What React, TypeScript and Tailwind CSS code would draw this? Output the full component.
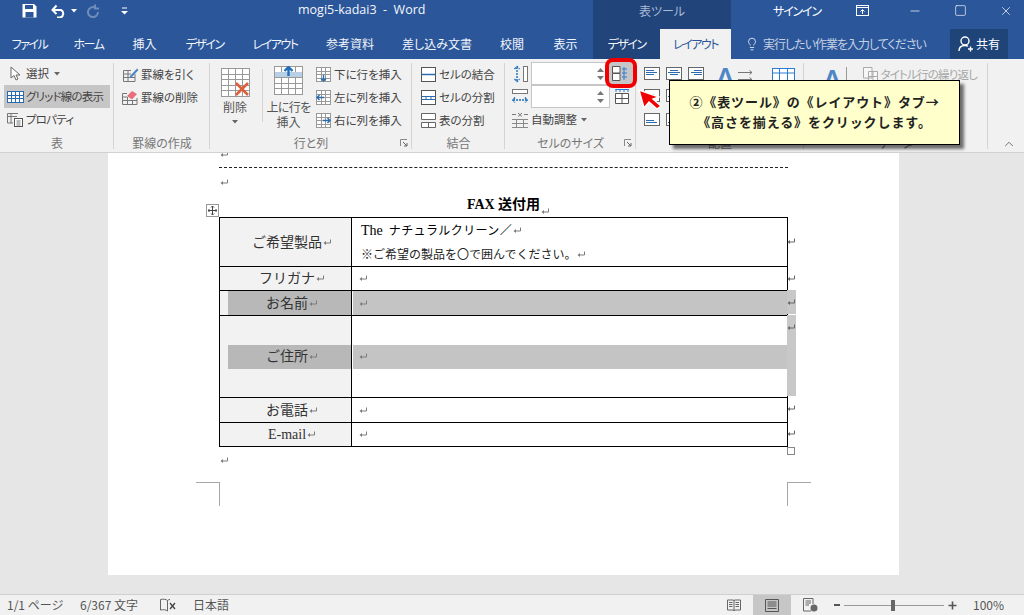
import React from "react";
import { Lightbulb, X, Minus, Square, ChevronUp } from "lucide-react";

const uiFont = { fontFamily: '"Noto Sans CJK JP", sans-serif' };

const Ret = ({ dark = false }: { dark?: boolean }) => (
  <svg width="9" height="9" viewBox="0 0 9 9" className="inline-block shrink-0">
    <path d="M7.5 1.5V5H2" fill="none" stroke={dark ? "#666" : "#7c7c7c"} strokeWidth="1" />
    <path d="M0.5 5L3 3V7Z" fill={dark ? "#666" : "#7c7c7c"} />
  </svg>
);

const Caret = ({ color = "#666" }: { color?: string }) => (
  <svg width="6" height="4" viewBox="0 0 6 4" className="shrink-0">
    <path d="M0 0H6L3 3.5Z" fill={color} />
  </svg>
);

// 小さい表アイコン
const Grid = ({
  w = 16,
  h = 16,
  rows = 3,
  cols = 3,
  color = "#777",
  children,
}: {
  w?: number;
  h?: number;
  rows?: number;
  cols?: number;
  color?: string;
  children?: React.ReactNode;
}) => {
  const lines: React.ReactNode[] = [];
  for (let i = 1; i < rows; i++) {
    const y = Math.round((h * i) / rows) + 0.5;
    lines.push(<path key={"r" + i} d={`M0 ${y}H${w}`} stroke={color} strokeWidth="1" />);
  }
  for (let i = 1; i < cols; i++) {
    const x = Math.round((w * i) / cols) + 0.5;
    lines.push(<path key={"c" + i} d={`M${x} 0V${h}`} stroke={color} strokeWidth="1" />);
  }
  return (
    <svg width={w + 1} height={h + 1} viewBox={`0 0 ${w + 1} ${h + 1}`} className="shrink-0">
      <rect x="0.5" y="0.5" width={w} height={h} fill="#fff" stroke={color} />
      {lines}
      {children}
    </svg>
  );
};

const AlignIcon = ({ lines }: { lines: string[] }) => (
  <svg width="16" height="13" viewBox="0 0 16 13" className="shrink-0">
    <rect x="0.5" y="0.5" width="15" height="12" fill="#fff" stroke="#666" />
    {lines.map((d, i) => (
      <path key={i} d={d} stroke="#2b6cb0" strokeWidth="1" fill="none" />
    ))}
  </svg>
);

const SmallButton = ({
  icon,
  label,
  active = false,
  caret = false,
  tight = false,
}: {
  icon: React.ReactNode;
  label: string;
  active?: boolean;
  caret?: boolean;
  tight?: boolean;
}) => (
  <div className={`flex h-[23px] items-center gap-[2px] pl-[3px] text-[11.5px] text-[#444] ${active ? "bg-[#c6c6c6]" : ""}`}>
    <span className="flex w-[17px] justify-center">{icon}</span>
    <span className={`whitespace-nowrap ${tight ? "tracking-[-0.8px]" : ""}`}>{label}</span>
    {caret && <span className="ml-[3px]"><Caret /></span>}
  </div>
);

const Launcher = () => (
  <svg width="8" height="8" viewBox="0 0 8 8" className="absolute bottom-[5px] right-[4px]">
    <path d="M0.5 7V0.5H7" fill="none" stroke="#888" />
    <path d="M3 3L7 7M7 4V7H4" fill="none" stroke="#666" />
  </svg>
);

const Group = ({
  width,
  label,
  launcher = false,
  className = "",
  children,
}: {
  width: number;
  label: string;
  launcher?: boolean;
  className?: string;
  children: React.ReactNode;
}) => (
  <div style={{ width }} className="relative flex h-full shrink-0 flex-col">
    <div className={`h-[75px] ${className}`}>{children}</div>
    <div className="flex h-[18px] items-center justify-center text-[12px] leading-none text-[#777]">{label}</div>
    {launcher && <Launcher />}
    <div className="absolute bottom-[3px] right-0 top-[4px] w-px bg-[#d4d4d4]" />
  </div>
);

const Spin = () => (
  <div className="flex h-[23px] w-[79px] flex-col items-end justify-center gap-[4px] border border-[#c6c6c6] bg-white pr-[5px]">
    <svg width="7" height="4" viewBox="0 0 7 4"><path d="M0 4L3.5 0L7 4Z" fill="#777" /></svg>
    <svg width="7" height="4" viewBox="0 0 7 4"><path d="M0 0H7L3.5 4Z" fill="#777" /></svg>
  </div>
);

const tabs: [string, number, boolean][] = [
  ["ファイル", 59, true],
  ["ホーム", 59, true],
  ["挿入", 53, false],
  ["デザイン", 67, true],
  ["レイアウト", 74, true],
  ["参考資料", 76, false],
  ["差し込み文書", 98, false],
  ["校閲", 52, false],
  ["表示", 55, false],
];

const TitleBar = () => (
  <div className="flex h-[29px] items-center bg-[#2b579a] pb-[8px] text-[12px] text-white">
    <div className="flex w-[298px] shrink-0 items-center pl-[22px]">
      <svg width="15" height="15" viewBox="0 0 15 15" className="shrink-0">
        <path d="M0.5 1H12L14.5 3.5V14.5H0.5Z" fill="#fff" />
        <rect x="3" y="2" width="8" height="4" fill="#2b579a" />
        <rect x="3.5" y="9" width="8" height="5.5" fill="#2b579a" />
      </svg>
      <svg width="15" height="14" viewBox="0 0 15 14" className="ml-[14px] shrink-0">
        <path d="M2 6H10A4 4 0 0 1 9 13.5H6" fill="none" stroke="#fff" strokeWidth="2" />
        <path d="M5.5 1.5L1.5 6L5.5 10" fill="none" stroke="#fff" strokeWidth="2" />
      </svg>
      <span className="ml-[5px]"><Caret color="#fff" /></span>
      <svg width="14" height="14" viewBox="0 0 14 14" className="ml-[9px] shrink-0">
        <path d="M9 3.5A5 5 0 1 0 12 8M9 0.5V4.5H13" fill="none" stroke="#6f8db8" strokeWidth="2" />
      </svg>
      <svg width="7" height="8" viewBox="0 0 7 8" className="ml-[21px] shrink-0">
        <path d="M1 1H6" stroke="#fff" />
        <path d="M0 4H7L3.5 7.5Z" fill="#fff" />
      </svg>
    </div>
    <div className="w-[295px] shrink-0 whitespace-pre font-['Open_Sans'] text-[12.5px] text-[#f4f6fa]">mogi5-kadai3  -  Word</div>
    <div className="-mb-[8px] flex h-[29px] w-[138px] shrink-0 items-center justify-center self-start bg-[#21457a] pb-[8px] text-[12px] text-[#a9bbd6]">表ツール</div>
    <div className="ml-[42px] w-[83px] shrink-0 text-[12px] tracking-[-1.2px]">サインイン</div>
    <svg width="14" height="12" viewBox="0 0 14 12" className="shrink-0">
      <rect x="0.5" y="0.5" width="12" height="10" fill="none" stroke="#fff" />
      <path d="M0 2.5H13" stroke="#fff" />
      <path d="M6.5 9V5M4.5 6.5L6.5 4.5L8.5 6.5" fill="none" stroke="#fff" />
    </svg>
    <Minus size={14} strokeWidth={1.2} className="ml-[38px] shrink-0" />
    <Square size={13} strokeWidth={1.2} className="ml-[32px] shrink-0" />
    <X size={14} strokeWidth={1.2} className="ml-[32px] shrink-0" />
  </div>
);

const TabBar = () => (
  <div className="flex h-[30px] items-center bg-[#2b579a] text-[12px] text-[#f2f5fa]">
    {tabs.map(([label, w, kana], i) => (
      <div key={i} style={{ width: w }} className={`shrink-0 text-center ${kana ? "tracking-[-1.5px]" : ""}`}>
        {label}
      </div>
    ))}
    <div className="flex h-full w-[67px] shrink-0 items-center justify-center bg-[#21457a] tracking-[-1.5px]">デザイン</div>
    <div className="flex h-full w-[71px] shrink-0 items-center justify-center bg-[#f1f1f1] tracking-[-1.5px] text-[#2b579a]">レイアウト</div>
    <div className="flex w-[219px] shrink-0 items-center pl-[14px] text-[#c3d0e3]">
      <Lightbulb size={14} strokeWidth={1.3} className="mr-[4px] shrink-0 text-white" />
      <span className="whitespace-nowrap tracking-[-1px]">実行したい作業を入力してください</span>
    </div>
    <div className="flex h-full w-[58px] shrink-0 items-center justify-center gap-[2px] bg-[#1e4478] text-white">
      <svg width="16" height="16" viewBox="0 0 16 16" className="shrink-0">
        <circle cx="7" cy="5" r="4" fill="none" stroke="#fff" strokeWidth="1.4" />
        <path d="M1 15C1 11 4 9.5 7 9.5C8 9.5 9 9.7 10 10.2" fill="none" stroke="#fff" strokeWidth="1.4" />
        <path d="M12.5 10.5V15.5M10 13H15" stroke="#fff" strokeWidth="1.4" />
      </svg>
      <span>共有</span>
    </div>
  </div>
);

const Ribbon = () => (
  <div className="relative flex h-[94px] border-b border-[#d2d2d2] bg-[#f1f1f1]">
    <Group width={114} label="表" className="pl-[4px] pr-[4px] pt-[3px]">
      <SmallButton
        caret
        label="選択"
        icon={
          <svg width="11" height="15" viewBox="0 0 11 15">
            <path d="M1 1V12L4 9.5L6 14L8 13L6 9H10Z" fill="#fff" stroke="#666" />
          </svg>
        }
      />
      <SmallButton active tight label="グリッド線の表示" icon={<Grid h={11} rows={3} cols={4} color="#2b6cb0" />} />
      <SmallButton
        tight
        label="プロパティ"
        icon={
          <svg width="17" height="16" viewBox="0 0 17 16">
            <path d="M0.5 1.5H11M0.5 1.5V11H6M0.5 4.5H10M4 1.5V11" fill="none" stroke="#777" />
            <rect x="7.5" y="6.5" width="8" height="8" fill="#fff" stroke="#555" />
            <path d="M9.5 9H13.5M9.5 11H13.5M9.5 13H13.5" stroke="#777" />
          </svg>
        }
      />
    </Group>
    <Group width={96} label="罫線の作成" className="pl-[5px] pt-[4px]">
      <SmallButton
        label="罫線を引く"
        icon={
          <svg width="16" height="15" viewBox="0 0 16 15">
            <path d="M0.5 3.5V14.5H12V7M0.5 7H8M0.5 10.5H12M5 3.5V14.5M0.5 3.5H8" fill="none" stroke="#777" />
            <path d="M7 9L14 1.5L15.5 3L8.5 10.5L6.5 11Z" fill="#4a86c5" />
          </svg>
        }
      />
      <SmallButton
        label="罫線の削除"
        icon={
          <svg width="17" height="15" viewBox="0 0 17 15">
            <path d="M0.5 3.5V14.5H15V8M0.5 7H5M0.5 10.5H15M5.5 7V14.5M10.5 10V14.5M0.5 3.5H5" fill="none" stroke="#777" />
            <path d="M5 6L10 1L15 4L10 9.5Z" fill="#e8707a" />
          </svg>
        }
      />
    </Group>
    <Group width={202} label="行と列" launcher className="flex">
      <div className="ml-[10px] flex w-[30px] flex-col items-center pt-[9px] text-[12px] text-[#555]">
        <Grid w={28} h={28} rows={5} cols={4} color="#999">
          <path d="M15 15L27 27M27 15L15 27" stroke="#d9603b" strokeWidth="2.6" />
        </Grid>
        <span className="mt-[1px] whitespace-nowrap leading-[18px]">削除</span>
        <span className="mt-[4px]"><Caret /></span>
      </div>
      <div className="ml-[12px] mt-[10px] h-[53px] w-px bg-[#d4d4d4]" />
      <div className="ml-[5px] flex w-[41px] flex-col items-center pt-[7px] text-[12px] leading-[15px] text-[#555]">
        <Grid w={28} h={28} rows={5} cols={4} color="#999">
          <rect x="1" y="6" width="27" height="5" fill="#b9cfe6" />
          <path d="M14.5 10V1.5M10.5 5L14.5 1L18.5 5" fill="none" stroke="#1f6fb8" strokeWidth="2.4" />
        </Grid>
        <span className="mt-[4px] whitespace-nowrap tracking-[-0.6px]">上に行を</span>
        <span className="whitespace-nowrap">挿入</span>
      </div>
      <div className="ml-[3px] pt-[4px]">
        <SmallButton label="下に行を挿入" icon={<Grid w={14} h={14} rows={4} cols={3} color="#999"><path d="M7.5 8V14M5 11.5L7.5 14L10 11.5" fill="none" stroke="#2b6cb0" strokeWidth="1.4" /></Grid>} />
        <SmallButton label="左に列を挿入" icon={<Grid w={14} h={14} rows={4} cols={3} color="#999"><path d="M8 7.5H1M3.5 5L1 7.5L3.5 10" fill="none" stroke="#2b6cb0" strokeWidth="1.4" /></Grid>} />
        <SmallButton label="右に列を挿入" icon={<Grid w={14} h={14} rows={4} cols={3} color="#999"><path d="M7 7.5H14M11.5 5L14 7.5L11.5 10" fill="none" stroke="#2b6cb0" strokeWidth="1.4" /></Grid>} />
      </div>
    </Group>
    <Group width={93} label="結合" className="pl-[5px] pt-[4px]">
      <SmallButton
        label="セルの結合"
        icon={
          <svg width="15" height="15" viewBox="0 0 15 15">
            <rect x="0.5" y="0.5" width="14" height="14" fill="#fff" stroke="#555" />
            <path d="M0.5 7.5H14.5" stroke="#2b6cb0" strokeWidth="1.5" />
          </svg>
        }
      />
      <SmallButton
        label="セルの分割"
        icon={
          <svg width="15" height="15" viewBox="0 0 15 15">
            <rect x="0.5" y="0.5" width="14" height="14" fill="#fff" stroke="#555" />
            <path d="M0.5 6.5H14.5M0.5 9.5H14.5M5 6.5V9.5M10 6.5V9.5" stroke="#2b6cb0" />
          </svg>
        }
      />
      <SmallButton
        label="表の分割"
        icon={
          <svg width="15" height="15" viewBox="0 0 15 15">
            <path d="M0.5 6.5V0.5H14.5V6.5ZM0.5 9.5H14.5V14.5H0.5ZM7.5 9.5V14.5" fill="#fff" stroke="#666" />
          </svg>
        }
      />
    </Group>
    <Group width={131} label="セルのサイズ" launcher className="flex pt-[3px]">
      <div className="ml-[7px] flex w-[19px] flex-col">
        <div className="flex h-[23px] items-center">
          <svg width="16" height="20" viewBox="0 0 16 20">
            <path d="M5 3V17M2.5 5L5 2.5L7.5 5M2.5 15L5 17.5L7.5 15" fill="none" stroke="#1f6fb8" strokeWidth="1.4" strokeDasharray="2 1" />
            <rect x="11.5" y="2.5" width="4" height="15" fill="#fff" stroke="#777" />
          </svg>
        </div>
        <div className="flex h-[23px] items-center">
          <svg width="16" height="18" viewBox="0 0 16 18">
            <rect x="0.5" y="1.5" width="15" height="4" fill="#fff" stroke="#777" />
            <path d="M1 12H15M3 9.5L0.8 12L3 14.5M13 9.5L15.2 12L13 14.5" fill="none" stroke="#1f6fb8" strokeWidth="1.4" strokeDasharray="2 1" />
          </svg>
        </div>
        <div className="flex h-[24px] items-center">
          <svg width="16" height="16" viewBox="0 0 16 16">
            <path d="M0 2.5H4M12 2.5H16M6 1L10 4.5M10 1L6 4.5" fill="none" stroke="#777" />
            <path d="M0 7.5H16M0 11.5H16M0 15.5H16M4.5 7.5V15.5M11.5 7.5V15.5" fill="none" stroke="#888" />
          </svg>
        </div>
      </div>
      <div className="flex w-[79px] flex-col">
        <Spin />
        <Spin />
        <div className="flex h-[24px] items-center gap-[4px] whitespace-nowrap text-[11.5px] text-[#444]">
          自動調整 <Caret />
        </div>
      </div>
      <div className="flex w-[24px] flex-col items-center">
        <div className="h-[23px]" />
        <svg width="14" height="16" viewBox="0 0 14 16" className="mt-[3px]">
          <path d="M0.5 5.5H13.5V15.5H0.5ZM0.5 10.5H13.5M7 5.5V15.5" fill="#fff" stroke="#555" />
          <path d="M1 1V4M5 1V4M9 1V4M13 1V4M0.5 1.5H14" stroke="#2b7cd3" />
        </svg>
      </div>
    </Group>
    <Group width={168} label="配置" className="flex pl-[8px] pt-[8px]">
      <div className="grid h-[58px] w-[62px] grid-cols-[22px_22px_17px] grid-rows-[22px_24px_13px]">
        <AlignIcon lines={["M2 3.5H10M2 5.5H13M2 7.5H10"]} />
        <AlignIcon lines={["M4 3.5H12M2 5.5H14M4 7.5H12"]} />
        <AlignIcon lines={["M6 3.5H14M3 5.5H14M6 7.5H14"]} />
        <AlignIcon lines={["M2 5.5H10M2 7.5H13"]} />
        <AlignIcon lines={["M4 5.5H12M2 7.5H14"]} />
        <AlignIcon lines={["M6 5.5H14M3 7.5H14"]} />
        <AlignIcon lines={["M2 7.5H10M2 9.5H13"]} />
        <AlignIcon lines={["M4 7.5H12M2 9.5H14"]} />
        <AlignIcon lines={["M6 7.5H14M3 9.5H14"]} />
      </div>
      <div className="-mt-[6px] ml-[9px] flex h-[27px] items-start text-[#4f86c6]">
        <span className="text-[31px] font-semibold leading-[34px]" style={{ fontFamily: '"Open Sans", sans-serif' }}>A</span>
        <svg width="16" height="12" viewBox="0 0 16 12" className="ml-[2px] mt-[9px]">
          <path d="M0 2.5H14M11.5 0.5L14 2.5L11.5 4.5M0 9.5H14M11.5 7.5L14 9.5L11.5 11.5" fill="none" stroke="#777" />
        </svg>
      </div>
      <svg width="24" height="14" viewBox="0 0 24 14" className="ml-[18px] mt-[1px]">
        <rect x="0.5" y="0.5" width="22" height="13" fill="#fff" stroke="#2b7cd3" />
        <path d="M7.5 0.5V13.5M15.5 0.5V13.5M0.5 5H22.5" stroke="#2b7cd3" />
      </svg>
    </Group>
    <Group width={184} label="データ" className="flex pl-[18px] pt-[4px]">
      <div className="flex h-[26px] items-start text-[#4f86c6]">
        <span className="text-[31px] font-semibold leading-[34px]" style={{ fontFamily: '"Open Sans", sans-serif' }}>A</span>
        <span className="ml-[3px] mt-[4px] h-[18px] w-px bg-[#999]" />
      </div>
      <div className="ml-[16px] flex h-[23px] items-center gap-[3px] whitespace-nowrap text-[11.5px] tracking-[-0.8px] text-[#a6a6a6]">
        <svg width="15" height="15" viewBox="0 0 15 15" className="shrink-0">
          <path d="M0.5 0.5H9V11H0.5ZM5.5 4.5H14.5V14.5H5.5ZM5.5 9.5H14.5M10 4.5V14.5" fill="#f7f7f7" stroke="#aaa" />
        </svg>
        タイトル行の繰り返し
      </div>
    </Group>
    <ChevronUp size={14} strokeWidth={1.6} className="ml-[14px] mt-[78px] shrink-0 text-[#666]" />
  </div>
);

type Row = { h: number; label: string; shade?: boolean };

const rows: Row[] = [
  { h: 24, label: "フリガナ" },
  { h: 25, label: "お名前", shade: true },
];
const rowsBottom: Row[] = [
  { h: 25, label: "お電話" },
  { h: 24, label: "E-mail" },
];

const SimpleRow = ({ h, label, shade }: Row) => (
  <div style={{ height: h }} className="flex border-t border-black text-[14px] text-[#333]">
    <div className="flex w-[131px] shrink-0 bg-[#f2f2f2]">
      <div className={`ml-[8px] flex grow items-center justify-center gap-[1px] pl-[5px] ${shade ? "bg-[#b8b8b8]" : ""}`}>
        {label}
        <Ret />
      </div>
    </div>
    <div className="flex grow border-l border-black">
      <div className={`ml-px flex grow items-center pl-[6px] ${shade ? "bg-[#c4c4c4]" : ""}`}>
        <Ret />
      </div>
    </div>
  </div>
);

const Document = () => (
  <div
    className="relative h-[422px] w-[791px] shrink-0 bg-white [font-feature-settings:normal]"
    style={{ fontFamily: '"Liberation Serif", "Noto Sans CJK JP", serif' }}
  >
    <div className="pl-[111px] text-[#222]">
      <div className="flex h-[6px] items-end overflow-hidden pl-[1px]"><Ret /></div>
      <div className="mt-[8px] h-px w-[569px] border-t border-dashed border-[#222]" />
      <div className="mt-[10px] flex h-[9px] pl-[1px]"><Ret /></div>
      <div className="mt-[8px] flex h-[22px] w-[569px] items-start justify-center gap-[1px] pl-[10px] text-[14px] font-bold leading-[20px] text-black">
        FAX 送付用<span className="mt-[6px] font-normal"><Ret /></span>
      </div>
      <div className="relative w-[569px] border-b border-l border-r border-black">
        {/* 表の移動ハンドル */}
        <div className="absolute -left-[14px] -top-[13px] flex h-[13px] w-[13px] items-center justify-center border border-[#999] bg-white">
          <svg width="9" height="9" viewBox="0 0 9 9">
            <path d="M4.5 0V9M0 4.5H9M3 1.5L4.5 0L6 1.5M3 7.5L4.5 9L6 7.5M1.5 3L0 4.5L1.5 6M7.5 3L9 4.5L7.5 6" fill="none" stroke="#444" />
          </svg>
        </div>
        <div className="flex h-[49px] border-t border-black">
          <div className="flex w-[131px] shrink-0 items-center justify-center gap-[1px] bg-[#f2f2f2] pl-[13px] text-[14px] text-[#333]">
            ご希望製品<Ret />
          </div>
          <div className="flex grow flex-col border-l border-black pl-[9px]">
            <div className="flex h-[25px] items-center gap-[1px] text-[12px] tracking-[0.4px] text-black">
              <span className="mr-[5px] text-[14px] tracking-normal">The</span>ナチュラルクリーン／<Ret />
            </div>
            <div className="flex h-[23px] items-center gap-[1px] text-[12px] text-[#222]">※ご希望の製品を〇で囲んでください。<Ret /></div>
          </div>
        </div>
        {rows.map((r) => (
          <SimpleRow key={r.label} {...r} />
        ))}
        <div className="flex h-[82px] border-t border-black text-[14px] text-[#333]">
          <div className="flex w-[131px] shrink-0 items-center bg-[#f2f2f2] pl-[8px]">
            <div className="flex h-[24px] grow items-center justify-center gap-[1px] bg-[#b8b8b8] pl-[5px]">
              ご住所<Ret />
            </div>
          </div>
          <div className="flex grow items-center border-l border-black">
            <div className="ml-px flex h-[24px] grow items-center bg-[#c4c4c4] pl-[6px]"><Ret /></div>
          </div>
        </div>
        {rowsBottom.map((r) => (
          <SimpleRow key={r.label} {...r} />
        ))}
        {/* 行末マーク */}
        <div className="absolute left-full top-0 flex w-[9px] flex-col">
          <div className="flex h-[49px] shrink-0 items-center"><Ret dark /></div>
          <div className="flex h-[24px] shrink-0 items-center"><Ret dark /></div>
          <div className="flex h-[24px] shrink-0 items-center bg-[#c8c8c8]"><Ret dark /></div>
          <div className="mt-px flex h-[81px] shrink-0 items-start bg-[#c8c8c8] pt-[8px]"><Ret dark /></div>
          <div className="flex h-[25px] shrink-0 items-center"><Ret dark /></div>
          <div className="flex h-[25px] shrink-0 items-center"><Ret dark /></div>
          <div className="mt-[1px] h-[8px] w-[8px] shrink-0 border border-[#888] bg-white" />
        </div>
      </div>
      <div className="mt-[9px] flex h-[9px] pl-[1px]"><Ret /></div>
    </div>
    {/* トンボ */}
    <div className="absolute left-[88px] top-[329px] h-[24px] w-[24px] border-r border-t border-[#a6a6a6]" />
    <div className="absolute left-[679px] top-[329px] h-[24px] w-[24px] border-l border-t border-[#a6a6a6]" />
  </div>
);

const StatusBar = () => (
  <div className="flex h-[21px] items-center border-t border-[#cfcfcf] bg-[#f1f1f1] text-[12px] text-[#555]">
    <span className="ml-[7px] w-[73px] shrink-0 whitespace-nowrap">1/1 ページ</span>
    <span className="w-[80px] shrink-0 whitespace-nowrap">6/367 文字</span>
    <svg width="16" height="14" viewBox="0 0 16 14" className="shrink-0">
      <path d="M7.5 2.5C6 1 3 1 0.5 1.5V12C3 11.5 6 11.5 7.5 13V2.5ZM7.5 2.5C8 2 9 1.6 10 1.4" fill="none" stroke="#666" />
      <path d="M10 5L15 11M15 5L10 11" stroke="#444" strokeWidth="1.3" />
    </svg>
    <span className="ml-[17px] w-[534px] shrink-0">日本語</span>
    <svg width="14" height="13" viewBox="0 0 14 13" className="shrink-0">
      <path d="M0.5 1H6.5L7 2L7.5 1H13.5V11H7.5L7 12L6.5 11H0.5ZM7 2V12M2 3.5H5.5M2 5.5H5.5M2 7.5H5.5M8.5 3.5H12M8.5 5.5H12M8.5 7.5H12" fill="none" stroke="#666" />
    </svg>
    <div className="ml-[12px] flex h-full w-[38px] shrink-0 items-center justify-center bg-[#c6c6c6]">
      <svg width="14" height="13" viewBox="0 0 14 13">
        <path d="M0.5 0.5H13.5V12.5H0.5ZM2.5 3H11.5M2.5 5H11.5M2.5 7H11.5M2.5 9.5H11.5" fill="none" stroke="#555" />
      </svg>
    </div>
    <svg width="15" height="14" viewBox="0 0 15 14" className="ml-[12px] shrink-0">
      <path d="M8 13H0.5V0.5H10V6M2.5 3H8M2.5 5H8M2.5 7H6" fill="none" stroke="#666" />
      <circle cx="11" cy="10" r="3.5" fill="#666" />
    </svg>
    <span className="ml-[16px] h-[2px] w-[6px] shrink-0 bg-[#555]" />
    <div className="relative ml-[4px] h-px w-[100px] shrink-0 bg-[#999]">
      <span className="absolute -top-[5px] left-[47px] h-[11px] w-[4px] bg-[#666]" />
    </div>
    <svg width="9" height="9" viewBox="0 0 9 9" className="ml-[4px] shrink-0">
      <path d="M4.5 0.5V8.5M0.5 4.5H8.5" stroke="#555" strokeWidth="1.6" />
    </svg>
    <span className="ml-[16px] whitespace-nowrap">100%</span>
  </div>
);

export default function App() {
  return (
    <div className="relative h-[615px] w-[1024px] overflow-hidden bg-[#e6e6e6] [font-feature-settings:'palt']" style={uiFont}>
      <TitleBar />
      <TabBar />
      <Ribbon />
      <div className="flex h-[441px] justify-center">
        <div className="ml-[-17px]"><Document /></div>
      </div>
      <StatusBar />

      {/* 注釈 */}
      <div className="absolute left-[605px] top-[58px] flex h-[30px] w-[32px] items-center justify-center rounded-[8px] border-[4px] border-[#f00000] bg-[#c6c6c6]">
        <svg width="18" height="15" viewBox="0 0 18 15">
          <path d="M0.5 0.5H8V7H0.5ZM0.5 7.5H8V14.5H0.5Z" fill="#fff" stroke="#555" />
          <path d="M12 1V14M10 3H15M10 7H15M10 11H15" stroke="#2b7cd3" />
        </svg>
      </div>
      <svg width="28" height="26" viewBox="0 0 28 26" className="absolute left-[636px] top-[86px]">
        <path d="M3 4L23 11L17 13L25 20L21 23L13 16L8 22Z" fill="#f00000" stroke="#fff" strokeWidth="1.5" />
      </svg>
      <div className="absolute left-[669px] top-[80px] flex h-[65px] w-[291px] flex-col items-center justify-center border border-black bg-[#ffffcc] pb-[2px] text-[13px] font-bold leading-[20px] tracking-[0.9px] text-[#222] shadow-[4px_4px_3px_rgba(0,0,0,0.55)] [font-feature-settings:normal]">
        <span className="whitespace-nowrap">②《表ツール》の《レイアウト》タブ→</span>
        <span className="whitespace-nowrap">《高さを揃える》をクリックします。</span>
      </div>
    </div>
  );
}
